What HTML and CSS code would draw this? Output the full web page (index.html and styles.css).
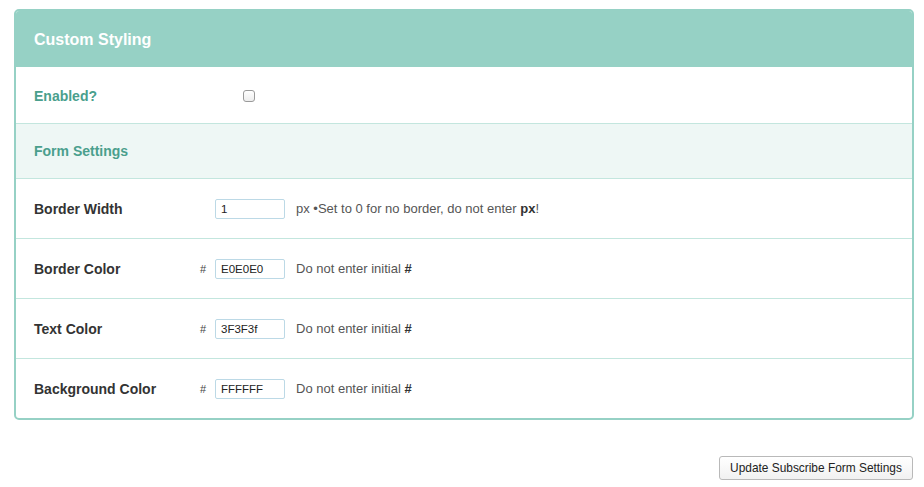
FILE: index.html
```html
<!DOCTYPE html>
<html>
<head>
<meta charset="utf-8">
<link rel="stylesheet" href="styles.css">
</head>
<body>
<div class="page">
  <div class="panel">
    <div class="panel-head">Custom Styling</div>
    <div class="row row-enabled">
      <div class="label teal">Enabled?</div>
      <span class="checkbox"></span>
    </div>
    <div class="row row-section">
      <div class="label teal">Form Settings</div>
    </div>
    <div class="row">
      <div class="label">Border Width</div>
      <div class="hash"></div>
      <div class="input">1</div>
      <div class="help">px •Set to 0 for no border, do not enter <b>px</b>!</div>
    </div>
    <div class="row">
      <div class="label">Border Color</div>
      <div class="hash">#</div>
      <div class="input">E0E0E0</div>
      <div class="help">Do not enter initial <b>#</b></div>
    </div>
    <div class="row">
      <div class="label">Text Color</div>
      <div class="hash">#</div>
      <div class="input">3F3F3f</div>
      <div class="help">Do not enter initial <b>#</b></div>
    </div>
    <div class="row row-last">
      <div class="label">Background Color</div>
      <div class="hash">#</div>
      <div class="input">FFFFFF</div>
      <div class="help">Do not enter initial <b>#</b></div>
    </div>
  </div>
  <div class="actions">
    <button class="btn">Update Subscribe Form Settings</button>
  </div>
</div>
</body>
</html>
```
FILE: styles.css
```css
html, body {
  margin: 0;
  padding: 0;
  background: #ffffff;
  font-family: "Liberation Sans", Arial, Helvetica, sans-serif;
  color: #333333;
}
.page {
  padding: 9px 10px 0 14px;
}
.panel {
  border: 2px solid #96d1c5;
  border-radius: 5px;
  overflow: hidden;
  background: #ffffff;
}
.panel-head {
  background: #96d1c5;
  color: #ffffff;
  font-weight: bold;
  font-size: 16px;
  height: 56px;
  line-height: 57px;
  padding-left: 18px;
}
.row {
  display: flex;
  align-items: center;
  height: 59px;
  border-top: 1px solid #c3e6de;
  padding-left: 18px;
}
.row-enabled {
  border-top: none;
  height: 56px;
}
.row-section {
  background: #eef7f5;
  height: 54px;
}
.label {
  font-weight: bold;
  font-size: 14px;
  color: #333333;
  width: 166px;
  padding-top: 1px;
}
.teal {
  color: #4a9f8d;
}
.row-enabled .label {
  width: 209px;
  padding-top: 1px;
}
.row-section .label {
  padding-top: 0;
}
.checkbox {
  display: block;
  width: 10px;
  height: 10px;
  border: 1px solid #9a9a9a;
  border-radius: 3px;
  background: linear-gradient(#ffffff, #ededed);
  margin-top: 1px;
}
.hash {
  width: 15px;
  font-size: 11px;
  color: #444444;
}
.input {
  box-sizing: border-box;
  width: 70px;
  height: 20px;
  border: 1px solid #bcd9e6;
  border-radius: 2px;
  font-size: 11.5px;
  line-height: 18px;
  padding-left: 5px;
  color: #222222;
}
.help {
  margin-left: 11px;
  font-size: 13px;
  color: #555555;
}
.help b {
  color: #333333;
}
.actions {
  display: flex;
  justify-content: flex-end;
  padding-top: 36px;
  padding-right: 1px;
}
.btn {
  font-family: "Liberation Sans", Arial, Helvetica, sans-serif;
  font-size: 11.9px;
  color: #222222;
  height: 24px;
  width: 194px;
  padding: 0;
  border: 1px solid #b9b9b9;
  border-radius: 3px;
  background: linear-gradient(#ffffff, #f1f1f1);
}
```
